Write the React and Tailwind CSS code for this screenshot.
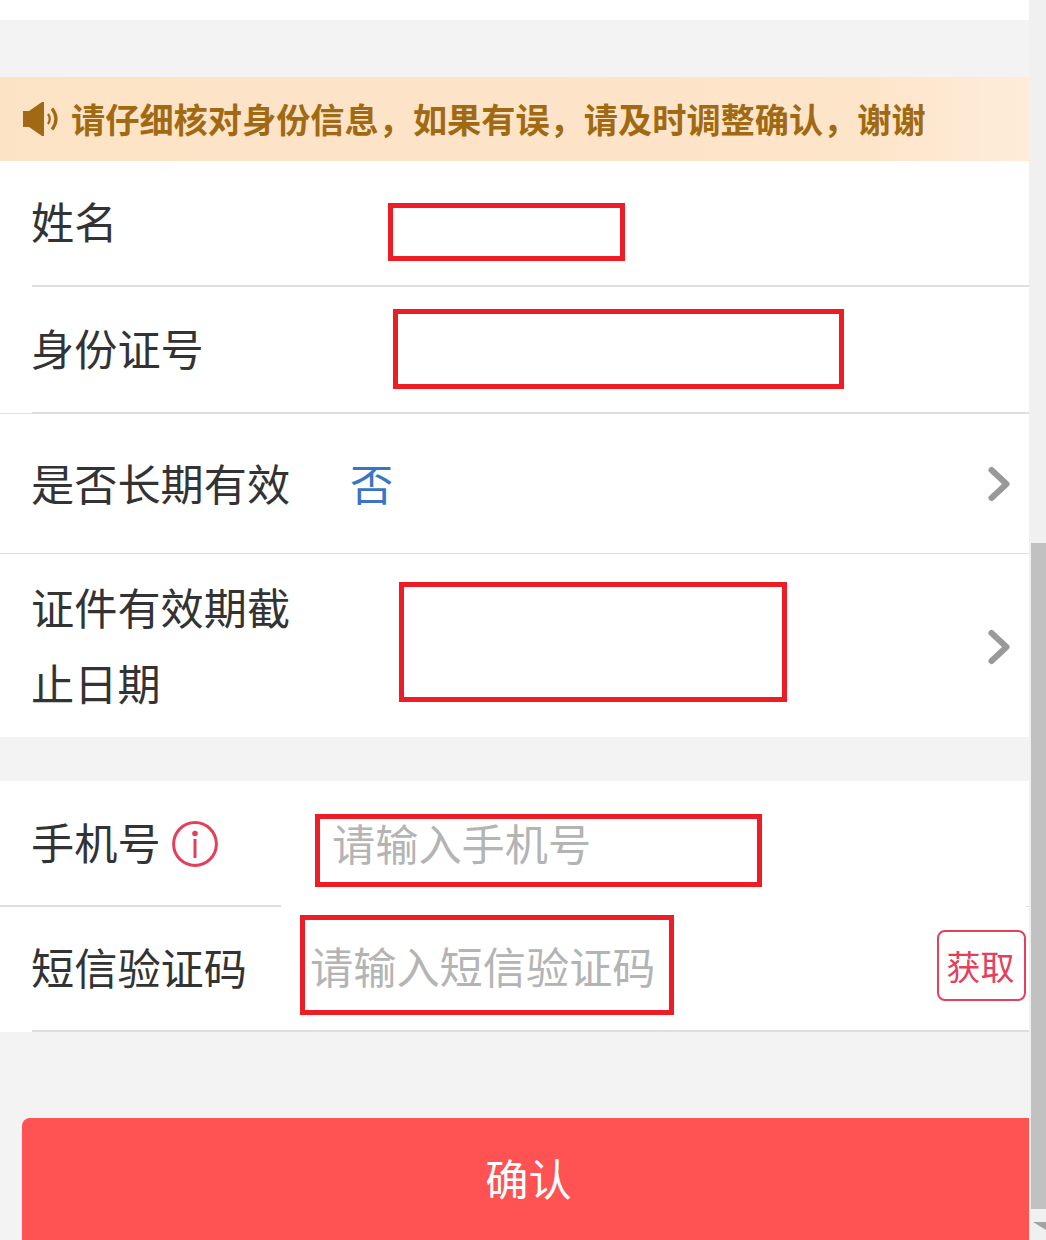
const FONT = "font-['Noto_Sans_CJK_SC','Noto_Sans',sans-serif]";

function RedBox({ className, children }) {
  return <div className={`absolute border-[5px] border-[#ee1c25] ${className}`}>{children}</div>;
}

function Chevron({ className }) {
  return (
    <svg className={`absolute left-[985px] ${className}`} width="28" height="40" viewBox="0 0 28 40" fill="none">
      <path d="M6.5 6 L21.5 20 L6.5 34" stroke="#999999" strokeWidth="6" strokeLinecap="round" strokeLinejoin="round" />
    </svg>
  );
}

function Speaker() {
  return (
    <svg width="36" height="34" viewBox="0 0 36 34" fill="none" className="shrink-0">
      <path d="M0 9 H6 L19 0 H21 V34 H19 L6 25 H0 Z" fill="#a06a14" />
      <path d="M25 12 Q28.5 17 25 22" stroke="#a06a14" strokeWidth="2.2" />
      <path d="M29 6.5 Q37 17 29 27.5" stroke="#a06a14" strokeWidth="3.2" />
    </svg>
  );
}

function InfoIcon() {
  return (
    <svg width="46" height="46" viewBox="0 0 46 46" fill="none" className="shrink-0">
      <circle cx="23" cy="23" r="21.4" stroke="#e4405a" strokeWidth="3" />
      <circle cx="23" cy="12.5" r="2.8" fill="#e4405a" />
      <rect x="21.5" y="18" width="3" height="19" fill="#e4405a" />
    </svg>
  );
}

export default function App() {
  return (
    <div className={`flex h-[1240px] w-[1046px] overflow-hidden bg-[#f3f3f3] ${FONT}`}>
      <main className="flex w-[1029px] shrink-0 flex-col text-[43.2px] leading-[76px] text-[#333333]">
        <div className="h-5 shrink-0 bg-white" />

        <div className="mt-[57px] flex h-[84px] shrink-0 items-center gap-3 bg-gradient-to-r from-[#fde3c6] via-[#fde5ca] via-85% to-[#feecd9] pl-[23px] text-[34.2px] font-bold leading-none text-[#a06a14]">
          <Speaker />
          <span className="pb-[2px]">请仔细核对身份信息，如果有误，请及时调整确认，谢谢</span>
        </div>

        <section className="bg-white">
          <div className="relative h-[126px] pl-[31px] pt-[21px]">
            <span>姓名</span>
            <RedBox className="left-[388px] top-[42px] h-[58px] w-[237px]" />
            <div className="absolute bottom-0 left-8 right-0 h-[2px] bg-[#dedede]" />
          </div>
          <div className="relative h-[127px] pl-[31px] pt-[22px]">
            <span>身份证号</span>
            <RedBox className="left-[393px] top-[22px] h-[80px] w-[451px]" />
            <div className="absolute bottom-0 left-0 right-0 h-px bg-[#e2e2e2]" />
            <div className="absolute bottom-0 left-8 right-0 h-[2px] bg-[#dedede]" />
          </div>
          <div className="relative flex h-[140px] items-center pl-[31px] pb-[4px]">
            <span className="w-[319px]">是否长期有效</span>
            <span className="text-[#3a75c5]">否</span>
            <Chevron className="top-[50px]" />
            <div className="absolute bottom-0 left-0 right-0 h-px bg-[#dedede]" />
          </div>
          <div className="relative h-[183px] pl-[31px] pt-[14px]">
            <div className="w-[270px]">证件有效期截止日期</div>
            <RedBox className="left-[399px] top-7 h-[120px] w-[388px]" />
            <Chevron className="top-[73px]" />
          </div>
        </section>

        <section className="mt-[44px] bg-white">
          <div className="relative flex h-[126px] items-start pl-[31px] pt-[22px]">
            <span>手机号</span>
            <span className="ml-[11px] mt-[18px]"><InfoIcon /></span>
            <RedBox className="left-[315px] top-[33px] h-[73px] w-[447px] bg-white pl-3 text-[#b4b4b4]">
              <span className="relative -top-[15px] block">请输入手机号</span>
            </RedBox>
            <div className="absolute bottom-0 left-0 w-[281px] h-[2px] bg-[#dedede]" />
            <div className="absolute bottom-0 right-0 w-[3px] h-px bg-[#dedede]" />
          </div>
          <div className="relative flex h-[125px] items-start pl-[31px] pt-[21px]">
            <span>短信验证码</span>
            <RedBox className="left-[300px] top-2 h-[100px] w-[374px] bg-white pl-[5px] pt-[7px] text-[#b4b4b4]">
              <span className="block">请输入短信验证码</span>
            </RedBox>
            <button className="absolute left-[937px] top-[23px] flex h-[71px] w-[89px] items-center justify-center rounded-lg border-2 border-[#e4405a] bg-white pr-[2px] text-[34px] leading-none text-[#e4405a]">
              获取
            </button>
            <div className="absolute bottom-0 left-8 right-0 h-[2px] bg-[#dedede]" />
          </div>
        </section>

        <button className="ml-[22px] mt-[86px] flex h-[130px] shrink-0 items-start justify-center rounded-tl-lg bg-[#ff5252] pl-[6px] pt-[21px] text-white">
          确认
        </button>
      </main>

      <aside className="relative w-[17px] shrink-0 bg-[#f0f0f0]">
        <div className="ml-[2px] mt-[543px] h-[666px] bg-[#c1c1c1]" />
        <div className="absolute bottom-[10px] left-[4px] h-0 w-0 border-l-[13px] border-t-[8px] border-l-transparent border-t-[#a3a3a3]" />
      </aside>
    </div>
  );
}
